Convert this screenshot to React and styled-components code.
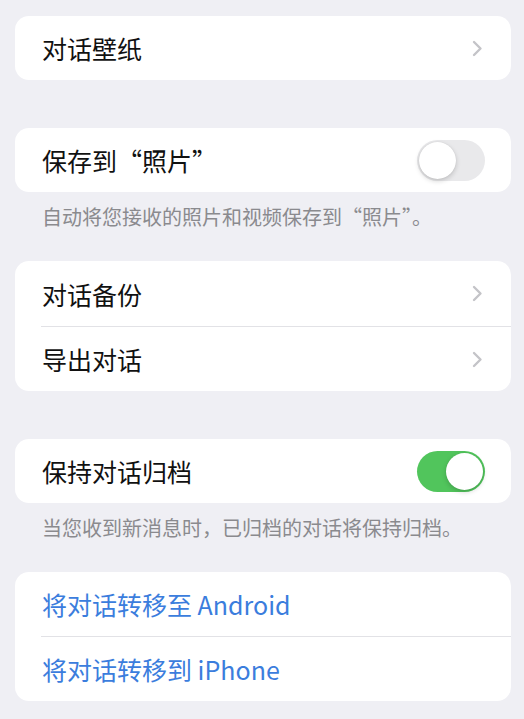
import React from 'react'
import styled, { createGlobalStyle } from 'styled-components'

const GlobalStyle = createGlobalStyle`
  html, body {
    margin: 0;
    padding: 0;
    background: #efeff4;
  }
  body {
    font-family: "Noto Sans CJK SC", "Noto Sans", sans-serif;
    -webkit-font-smoothing: antialiased;
  }
`

const Chevron = () => (
  <svg width="11" height="17" viewBox="0 0 11 17" fill="none">
    <polyline points="2,2 8.5,8.5 2,15" stroke="#c4c4c8" strokeWidth="2.4" strokeLinecap="round" strokeLinejoin="round" />
  </svg>
)

const Switch = ({ on }) => (
  <Track $on={on}>
    <Knob $on={on} />
  </Track>
)

export default function App () {
  return (
    <Page>
      <GlobalStyle />
      <Group>
        <Row>
          <RowBody>
            <Label>对话壁纸</Label>
            <Chevron />
          </RowBody>
        </Row>
      </Group>
      <Spacer />

      <Group>
        <Row>
          <RowBody $toggle>
            <Label>保存到“照片”</Label>
            <Switch on={false} />
          </RowBody>
        </Row>
      </Group>
      <Footnote>自动将您接收的照片和视频保存到“照片”。</Footnote>

      <Group>
        <Row>
          <RowBody $tall>
            <Label>对话备份</Label>
            <Chevron />
          </RowBody>
        </Row>
        <Row>
          <RowBody $divided>
            <Label>导出对话</Label>
            <Chevron />
          </RowBody>
        </Row>
      </Group>
      <Spacer />

      <Group>
        <Row>
          <RowBody $toggle>
            <Label>保持对话归档</Label>
            <Switch on />
          </RowBody>
        </Row>
      </Group>
      <Footnote>当您收到新消息时，已归档的对话将保持归档。</Footnote>

      <Group>
        <Row>
          <RowBody>
            <Label $link>将对话转移至 Android</Label>
          </RowBody>
        </Row>
        <Row>
          <RowBody $divided>
            <Label $link>将对话转移到 iPhone</Label>
          </RowBody>
        </Row>
      </Group>
    </Page>
  )
}

const Page = styled.div`
  padding: 16px 13px 19px 15px;
  background: #efeff4;
  min-height: 719px;
  box-sizing: border-box;
`
const Group = styled.div`
  background: #fff;
  border-radius: 14px;
  overflow: hidden;
`
const Spacer = styled.div`
  height: 48px;
`
const Row = styled.div`
  padding-left: 26px;
`
const RowBody = styled.div`
  display: flex;
  align-items: center;
  justify-content: space-between;
  height: ${p => p.$tall ? '65px' : '64px'};
  padding-right: ${p => p.$toggle ? '26px' : '28px'};
  border-top: ${p => p.$divided ? '1px solid #e2e2e6' : 'none'};
`
const Label = styled.div`
  font-size: 25px;
  line-height: 32px;
  color: ${p => p.$link ? '#3b7ddd' : '#111'};
  padding-left: 1px;
`
const Footnote = styled.div`
  font-size: 20px;
  line-height: 24px;
  color: #8a8a8e;
  padding: 13px 0 32px 27px;
`
const Track = styled.div`
  width: 68px;
  height: 41px;
  border-radius: 21px;
  background: ${p => p.$on ? '#51c55c' : '#e9e9eb'};
  display: flex;
  align-items: center;
  justify-content: ${p => p.$on ? 'flex-end' : 'flex-start'};
  padding: 0 2px;
  box-sizing: border-box;
`
const Knob = styled.div`
  width: 37px;
  height: 37px;
  border-radius: 50%;
  background: #fff;
  box-shadow: 0 2px 5px rgba(0, 0, 0, 0.18), 0 0 1px rgba(0, 0, 0, 0.12);
`
